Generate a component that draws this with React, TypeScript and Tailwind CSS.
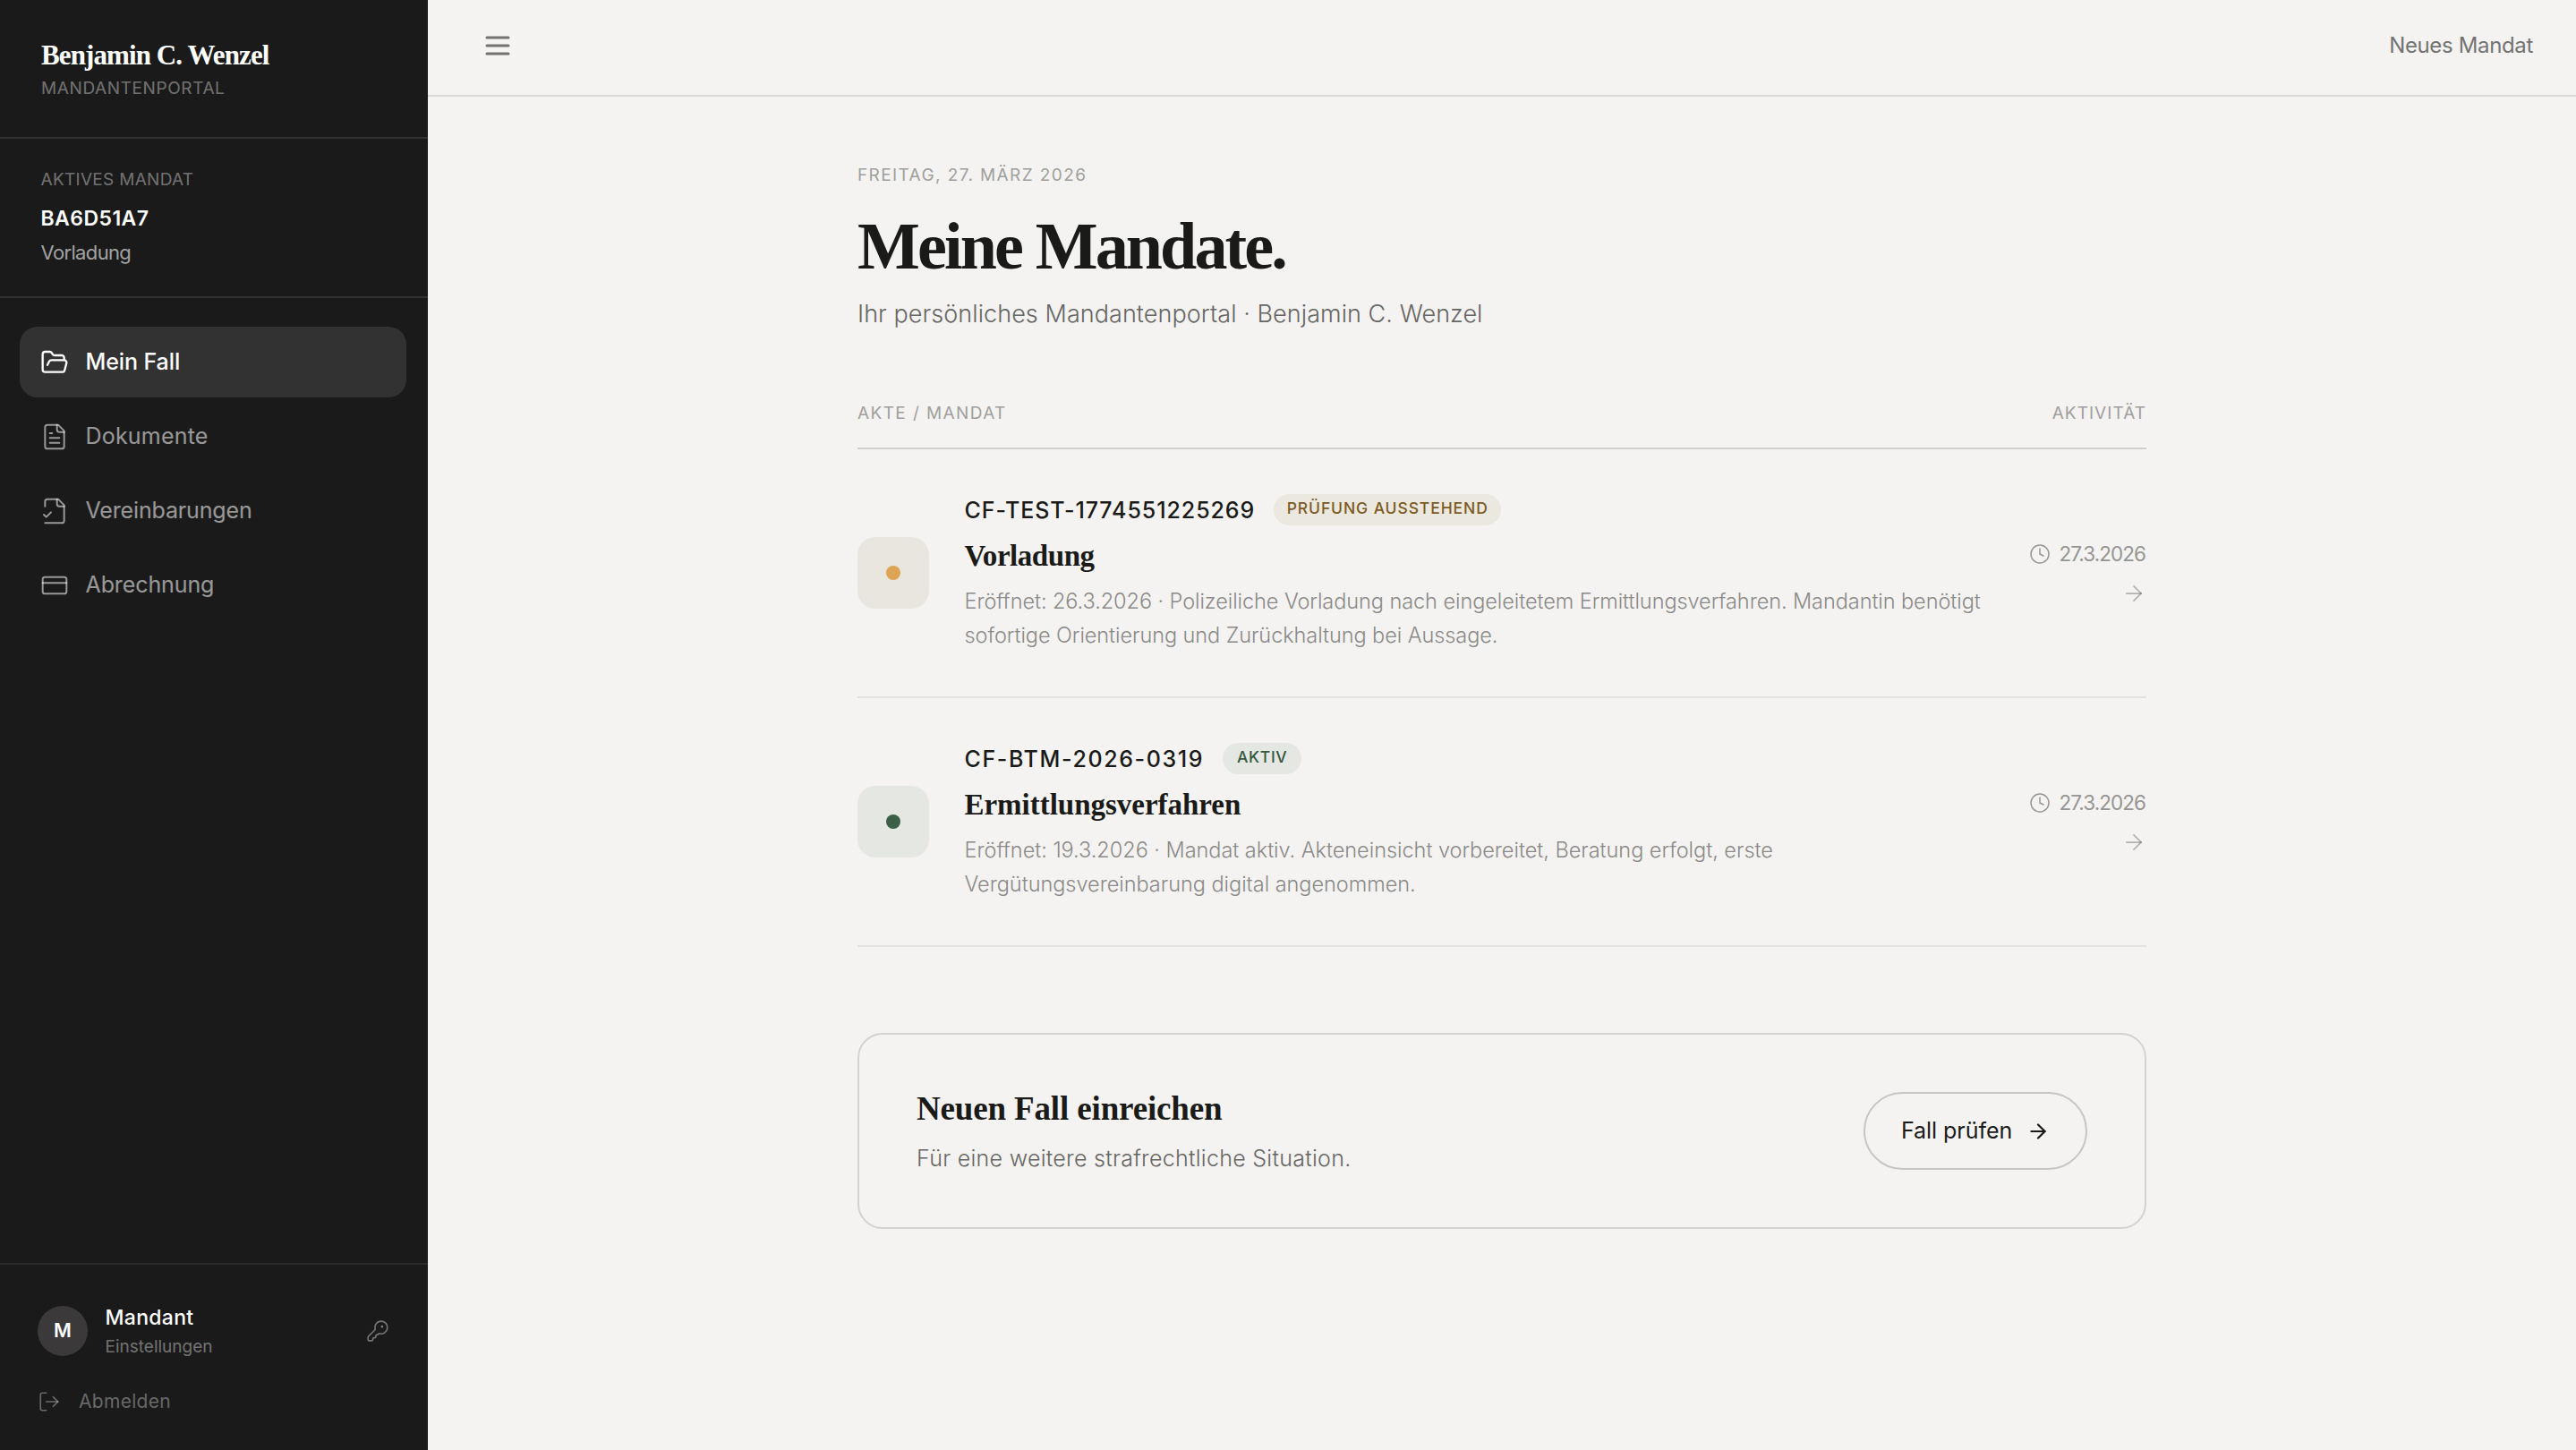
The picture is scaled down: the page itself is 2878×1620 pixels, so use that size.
import type { ReactNode } from "react";

type IconProps = { className: string; stroke?: number; children: ReactNode };

function Icon({ className, stroke = 1.5, children }: IconProps) {
  return (
    <svg
      viewBox="0 0 24 24"
      fill="none"
      stroke="currentColor"
      strokeWidth={stroke}
      strokeLinecap="round"
      strokeLinejoin="round"
      className={className}
    >
      {children}
    </svg>
  );
}

const folderOpen = (
  <path d="m6 14 1.5-2.9A2 2 0 0 1 9.24 10H20a2 2 0 0 1 1.94 2.5l-1.54 6a2 2 0 0 1-1.95 1.5H4a2 2 0 0 1-2-2V5a2 2 0 0 1 2-2h3.9a2 2 0 0 1 1.69.9l.81 1.2a2 2 0 0 0 1.67.9H18a2 2 0 0 1 2 2v2" />
);
const fileText = (
  <>
    <path d="M15 2H6a2 2 0 0 0-2 2v16a2 2 0 0 0 2 2h12a2 2 0 0 0 2-2V7Z" />
    <path d="M14 2v4a2 2 0 0 0 2 2h4" />
    <path d="M10 9H8" />
    <path d="M16 13H8" />
    <path d="M16 17H8" />
  </>
);
const fileCheck = (
  <>
    <path d="M4 22h14a2 2 0 0 0 2-2V7l-5-5H6a2 2 0 0 0-2 2v4" />
    <path d="M14 2v4a2 2 0 0 0 2 2h4" />
    <path d="m3 15 2 2 4-4" />
  </>
);
const creditCard = (
  <>
    <rect width="20" height="14" x="2" y="5" rx="2" />
    <path d="M2 10h20" />
  </>
);
const arrowRight = (
  <>
    <path d="M5 12h14" />
    <path d="m12 5 7 7-7 7" />
  </>
);

const navItems = [
  { label: "Mein Fall", icon: folderOpen, tracking: "tracking-[-0.1px]", active: true },
  { label: "Dokumente", icon: fileText, tracking: "tracking-[0.2px]", active: false },
  { label: "Vereinbarungen", icon: fileCheck, tracking: "tracking-[-0.15px]", active: false },
  { label: "Abrechnung", icon: creditCard, tracking: "tracking-[-0.1px]", active: false },
];

const cases = [
  {
    id: "CF-TEST-1774551225269",
    idTracking: "tracking-[0.92px]",
    status: "PRÜFUNG AUSSTEHEND",
    badge: "w-[254px] bg-[#ebe8e0] text-[#7d5a24] tracking-[0.9px]",
    box: "bg-[#e9e6df]",
    dot: "bg-[#dea456]",
    title: "Vorladung",
    titleTracking: "tracking-[-0.45px]",
    lines: [
      "Eröffnet: 26.3.2026 · Polizeiliche Vorladung nach eingeleitetem Ermittlungsverfahren. Mandantin benötigt",
      "sofortige Orientierung und Zurückhaltung bei Aussage.",
    ],
    textTracking: "tracking-[-0.07px]",
    date: "27.3.2026",
  },
  {
    id: "CF-BTM-2026-0319",
    idTracking: "tracking-[1.62px]",
    status: "AKTIV",
    badge: "w-[88px] bg-[#e5e7e2] text-[#35593f] tracking-[0.7px]",
    box: "bg-[#e5e7e2]",
    dot: "bg-[#3b5f47]",
    title: "Ermittlungsverfahren",
    titleTracking: "tracking-[-0.02px]",
    lines: [
      "Eröffnet: 19.3.2026 · Mandat aktiv. Akteneinsicht vorbereitet, Beratung erfolgt, erste",
      "Vergütungsvereinbarung digital angenommen.",
    ],
    textTracking: "tracking-[-0.03px]",
    date: "27.3.2026",
  },
];

function Sidebar() {
  return (
    <aside className="flex w-[478px] shrink-0 flex-col bg-[#1a1a1a] text-white">
      <div className="h-[155px] border-b-2 border-white/10 pt-[42px] pl-[46px]">
        <p className="font-['Liberation_Serif',serif] text-[31px] leading-[40px] font-bold tracking-[-0.9px]">
          Benjamin C. Wenzel
        </p>
        <p className="mt-[3px] text-[19px] leading-7 tracking-[0.6px] text-white/40">MANDANTENPORTAL</p>
      </div>

      <div className="h-[178px] border-b-2 border-white/10 pt-8 pl-[45.5px]">
        <p className="text-[19px] leading-7 tracking-[0.3px] text-white/40">AKTIVES MANDAT</p>
        <p className="mt-3 text-[23px] leading-[34px] font-semibold tracking-[0.45px]">BA6D51A7</p>
        <p className="mt-[5px] text-[22px] leading-8 tracking-[-0.65px] text-white/60">Vorladung</p>
      </div>

      <nav className="flex flex-1 flex-col gap-1 pt-8 pr-6 pl-[22px]">
        {navItems.map((item) => (
          <a
            key={item.label}
            className={
              item.active
                ? "flex h-[79px] items-center gap-[18.5px] rounded-[20px] bg-[#323232] pl-[23px] font-medium text-white"
                : "flex h-[79px] items-center gap-[18.5px] rounded-[20px] pl-[23px] text-white/55"
            }
          >
            <Icon className="size-8" stroke={item.active ? 1.75 : 1.5}>
              {item.icon}
            </Icon>
            <span className={`pb-0.5 text-[25px] leading-9 ${item.tracking}`}>{item.label}</span>
          </a>
        ))}
      </nav>

      <div className="border-t-2 border-white/8 pt-[41px] pr-[43px] pb-[38px] pl-[42px]">
        <div className="flex items-center">
          <span className="flex size-14 items-center justify-center rounded-full bg-[#3b3939] text-[21.5px] font-semibold">
            M
          </span>
          <div className="ml-[19.5px] flex-1 pt-0.5">
            <p className="text-[23px] leading-8 font-medium tracking-[0.3px]">Mandant</p>
            <p className="mt-[3px] text-[19px] leading-7 text-white/40">Einstellungen</p>
          </div>
          <Icon className="size-[26px] text-white/40">
            <path d="M2.586 17.414A2 2 0 0 0 2 18.828V21a1 1 0 0 0 1 1h3a1 1 0 0 0 1-1v-1a1 1 0 0 1 1-1h1a1 1 0 0 0 1-1v-1a1 1 0 0 1 1-1h.172a2 2 0 0 0 1.414-.586l.814-.814a6.5 6.5 0 1 0-4-4z" />
            <circle cx="16.5" cy="7.5" r=".5" fill="currentColor" />
          </Icon>
        </div>
        <div className="mt-[31px] flex items-center gap-5 text-white/35">
          <Icon className="size-[26px]">
            <path d="m16 17 5-5-5-5" />
            <path d="M21 12H9" />
            <path d="M9 21H5a2 2 0 0 1-2-2V5a2 2 0 0 1 2-2h4" />
          </Icon>
          <span className="text-[21px] leading-8 tracking-[0.3px]">Abmelden</span>
        </div>
      </div>
    </aside>
  );
}

function CaseRow({ item }: { item: (typeof cases)[number] }) {
  return (
    <li className="flex h-[278px] items-center border-b-2 border-[#e3e2e0]">
      <span className={`flex size-20 shrink-0 items-center justify-center rounded-[20px] ${item.box}`}>
        <span className={`size-4 rounded-full ${item.dot}`} />
      </span>
      <div className="ml-[39.5px] flex-1 whitespace-nowrap">
        <div className="flex h-9 items-start gap-[21px]">
          <span className={`text-[25px] leading-9 font-medium text-[#1a1a18] ${item.idTracking}`}>{item.id}</span>
          <span
            className={`flex h-[35px] items-center justify-center rounded-full pb-px text-[17.5px] font-medium ${item.badge}`}
          >
            {item.status}
          </span>
        </div>
        <h2
          className={`mt-3 mb-px font-['Liberation_Serif',serif] text-[33px] leading-[42px] font-bold text-[#1a1a18] ${item.titleTracking}`}
        >
          {item.title}
        </h2>
        <p className={`mt-[11px] text-[23.5px] leading-[38px] font-light text-[#8b8a88] ${item.textTracking}`}>
          {item.lines[0]}
          <br />
          {item.lines[1]}
        </p>
      </div>
      <div className="flex flex-col items-end">
        <div className="flex items-center gap-[10px] pr-px text-[#969594]">
          <Icon className="size-6">
            <circle cx="12" cy="12" r="10" />
            <path d="M12 6v6l4 2" />
          </Icon>
          <span className="text-[22.5px] leading-[30px] tracking-[-0.95px]">{item.date}</span>
        </div>
        <Icon className="mt-[15px] size-7 text-[#1a1a18]/30">{arrowRight}</Icon>
      </div>
    </li>
  );
}

export default function App() {
  return (
    <div className="flex h-[1620px] w-[2878px] overflow-hidden bg-[#f4f3f1] font-['Inter',sans-serif]">
      <Sidebar />
      <main className="flex flex-1 flex-col">
        <header className="flex h-[108px] items-center justify-between border-b-2 border-[#dad9d7] pr-12 pb-1 pl-[60px] text-[#737371]">
          <Icon className="size-9" stroke={2}>
            <path d="M4 6h16M4 12h16M4 18h16" />
          </Icon>
          <a className="text-[24px] leading-9 tracking-[-0.35px]">Neues Mandat</a>
        </header>

        <div className="mx-auto w-[1440px] pt-[73px]">
          <p className="text-[19px] leading-[30px] tracking-[1.4px] text-[#a09f9d]">FREITAG, 27. MÄRZ 2026</p>
          <h1 className="mt-6 font-['Liberation_Serif',serif] text-[74px] leading-[80px] font-bold tracking-[-2.85px] text-[#1a1a18]">
            Meine Mandate.
          </h1>
          <p className="mt-[15px] text-[27px] leading-[42px] font-light tracking-[0.06px] text-[#666664]">
            Ihr persönliches Mandantenportal · Benjamin C. Wenzel
          </p>

          <div className="mt-[75px] flex justify-between border-b-2 border-[#d0cfce] pb-[23px] text-[19px] leading-[30px] text-[#a09f9d]">
            <span className="tracking-[1.4px]">AKTE / MANDAT</span>
            <span className="tracking-[1.05px]">AKTIVITÄT</span>
          </div>

          <ul>
            {cases.map((item) => (
              <CaseRow key={item.id} item={item} />
            ))}
          </ul>

          <section className="mt-24 flex h-[219px] items-center justify-between rounded-[28px] border-2 border-[#d3d2d0] px-16">
            <div className="pt-0.5">
              <h3 className="font-['Liberation_Serif',serif] text-[37px] leading-[46px] font-bold tracking-[-0.15px] text-[#1a1a18]">
                Neuen Fall einreichen
              </h3>
              <p className="mt-[13px] text-[25px] leading-[38px] font-light tracking-[0.28px] text-[#666664]">
                Für eine weitere strafrechtliche Situation.
              </p>
            </div>
            <button className="flex h-[87px] w-[250px] items-center justify-between rounded-full border-2 border-[#c7c6c4] px-10 text-[25px] tracking-[-0.05px] text-[#1a1a18]">
              Fall prüfen
              <Icon className="size-[26px]" stroke={2}>
                {arrowRight}
              </Icon>
            </button>
          </section>
        </div>
      </main>
    </div>
  );
}
